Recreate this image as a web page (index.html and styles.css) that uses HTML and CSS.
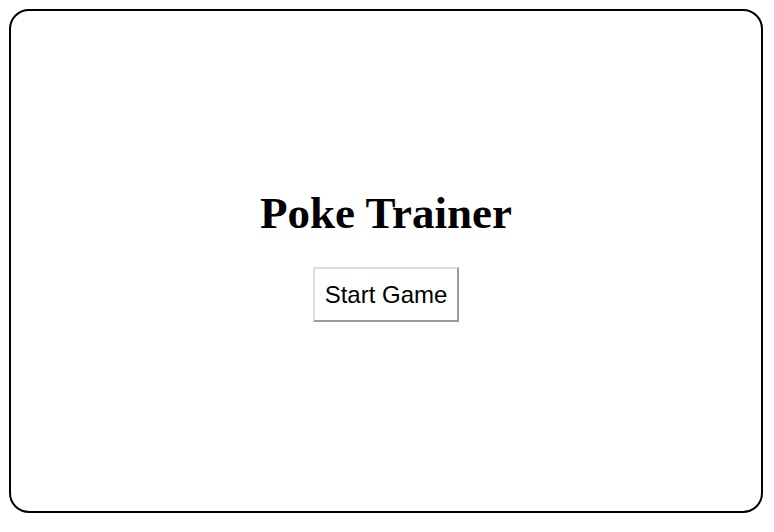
FILE: index.html
```html
<!DOCTYPE html>
<html>
<head>
<meta charset="utf-8">
<link rel="stylesheet" href="styles.css">
</head>
<body>
<div class="box">
  <h1 class="title">Poke Trainer</h1>
  <button class="start">Start Game</button>
</div>
</body>
</html>
```
FILE: styles.css
```css
html, body { margin: 0; padding: 0; background: #fff; }
.box {
  box-sizing: border-box;
  width: 754px;
  height: 504px;
  margin: 9px;
  border: 2px solid #000;
  border-radius: 20px;
  display: flex;
  flex-direction: column;
  align-items: center;
  justify-content: center;
  padding-bottom: 14px;
}
.title {
  font-family: "Liberation Serif", "Times New Roman", serif;
  font-weight: bold;
  font-size: 45px;
  margin: 0 0 28px 0;
  color: #000;
}
.start {
  font-family: "Liberation Sans", Arial, sans-serif;
  font-size: 24px;
  line-height: 28px;
  padding: 12px 10px 11px;
  background: #fff;
  color: #000;
  border-style: solid;
  border-width: 2px;
  border-color: #dcdcdc #9a9a9a #9a9a9a #dcdcdc;
}
```
